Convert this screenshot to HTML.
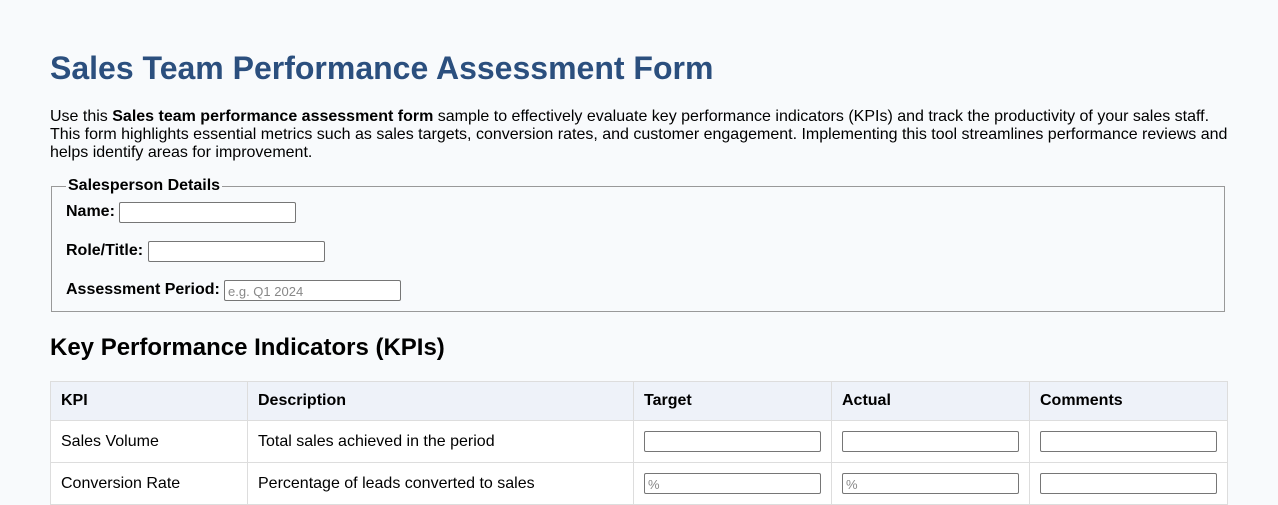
<!DOCTYPE html>
<html><head><meta charset="utf-8"><style>
*{box-sizing:border-box}
body{margin:0;width:1278px;height:501px;overflow:hidden;background:#f8fafc;font-family:"Liberation Sans",Arial,sans-serif;color:#000;position:relative}
h1{position:absolute;left:50px;top:50px;margin:0;font-size:32px;color:#2b4f7e;font-weight:bold}
p{position:absolute;left:50px;top:108px;margin:0;font-size:16px;line-height:18px;width:1182px}
.fs{position:absolute;left:51px;top:186px;width:1174px;height:126px;border:1px solid #999}
.lg{position:absolute;left:66px;top:177px;background:#f8fafc;padding:0 2px;font-weight:bold;font-size:16px}
.lb{position:absolute;left:66px;font-weight:bold;font-size:16px}
.in{position:absolute;width:177px;height:21px;border:1px solid #767676;border-radius:2px;background:#fff;font-size:13px;color:#888;padding:3px 0 0 3px}
h2{position:absolute;left:50px;top:334px;margin:0;font-size:24px;font-weight:bold}
table{position:absolute;left:50px;top:381px;border-collapse:collapse;font-size:16px}
td,th{border:1px solid #ddd;text-align:left;padding:0 10px;vertical-align:middle}
th{background:#eef2f9;height:39px}
td{height:42px;background:#fff}
td .in{position:static;display:block}
</style></head><body>
<h1>Sales Team Performance Assessment Form</h1>
<p>Use this <b>Sales team performance assessment form</b> sample to effectively evaluate key performance indicators (KPIs) and track the productivity of your sales staff. This form highlights essential metrics such as sales targets, conversion rates, and customer engagement. Implementing this tool streamlines performance reviews and helps identify areas for improvement.</p>
<div class="fs"></div>
<div class="lg">Salesperson Details</div>
<div class="lb" style="top:203px">Name:</div><div class="in" style="left:119px;top:202px"></div>
<div class="lb" style="top:242px">Role/Title:</div><div class="in" style="left:148px;top:241px"></div>
<div class="lb" style="top:281px">Assessment Period:</div><div class="in" style="left:224px;top:280px">e.g. Q1 2024</div>
<h2>Key Performance Indicators (KPIs)</h2>
<table>
<tr><th style="width:197px">KPI</th><th style="width:386px">Description</th><th style="width:198px">Target</th><th style="width:198px">Actual</th><th style="width:198px">Comments</th></tr>
<tr><td>Sales Volume</td><td>Total sales achieved in the period</td><td><div class="in"></div></td><td><div class="in"></div></td><td><div class="in"></div></td></tr>
<tr><td>Conversion Rate</td><td>Percentage of leads converted to sales</td><td><div class="in">%</div></td><td><div class="in">%</div></td><td><div class="in"></div></td></tr>
</table>
</body></html>
